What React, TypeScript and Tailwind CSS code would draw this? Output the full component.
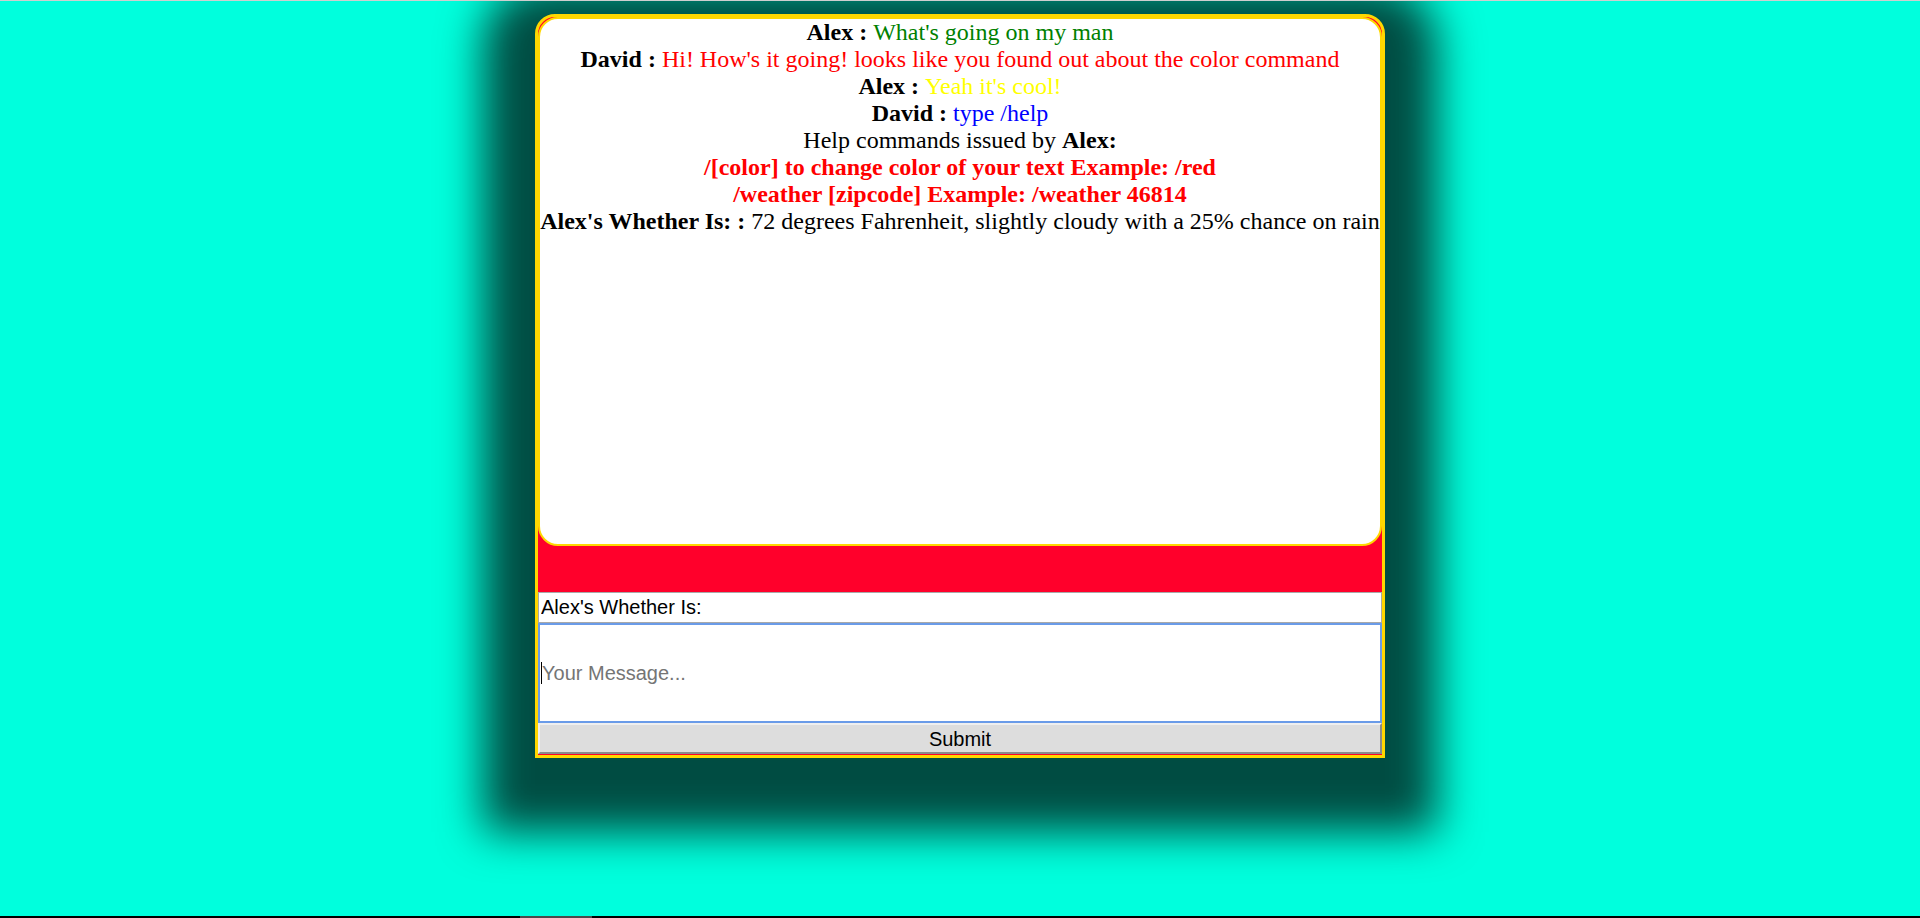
import React from "react";

export default function App() {
  return (
    <div className="h-[918px] w-full overflow-hidden bg-[#00ffdd] flex flex-col">
      <div className="relative z-10 h-px w-full bg-[#cfcfcf]" />
      <div className="flex-1 flex flex-col items-center">
        <div className="mt-[13px] w-[850px] border-[3px] border-[#ffd700] rounded-t-[20px] bg-[#ff002b] shadow-[0_22px_44px_52px_rgba(0,0,0,0.7)] flex flex-col">
          <div className="h-[529px] border-2 border-[#ffd700] rounded-[20px] bg-white text-center text-[24px] leading-[normal] text-black font-['Liberation_Serif',serif]">
            <div className="whitespace-nowrap">
              <b>Alex : </b>
              <span className="text-[#008000]">What's going on my man</span>
            </div>
            <div className="whitespace-nowrap">
              <b>David : </b>
              <span className="text-[#ff0000]">
                Hi! How's it going! looks like you found out about the color command
              </span>
            </div>
            <div className="whitespace-nowrap">
              <b>Alex : </b>
              <span className="text-[#ffff00]">Yeah it's cool!</span>
            </div>
            <div className="whitespace-nowrap">
              <b>David : </b>
              <span className="text-[#0000ff]">type /help</span>
            </div>
            <div className="whitespace-nowrap">
              Help commands issued by <b>Alex:</b>
            </div>
            <div className="whitespace-nowrap font-bold text-[#ff0000]">
              /[color] to change color of your text Example: /red
            </div>
            <div className="whitespace-nowrap font-bold text-[#ff0000]">
              /weather [zipcode] Example: /weather 46814
            </div>
            <div className="whitespace-nowrap">
              <b>Alex's Whether Is: : </b>72 degrees Fahrenheit, slightly cloudy with a 25% chance on rain
            </div>
          </div>
          <div className="h-[46px]" />
          <input
            readOnly
            defaultValue="Alex's Whether Is:"
            className="h-[31px] w-full border border-[#a9a9a9] bg-white pl-[2px] text-[20px] text-black outline-none font-['Liberation_Sans',Arial,sans-serif]"
          />
          <div className="relative">
            <input
              placeholder="Your Message..."
              className="block h-[100px] w-full border-2 border-[#6a9be8] bg-white pl-[2px] text-[20px] text-black outline-none placeholder:text-[#757575] font-['Liberation_Sans',Arial,sans-serif]"
            />
            <span className="pointer-events-none absolute left-[3px] top-[39px] h-[22px] w-px bg-black" />
          </div>
          <button className="h-[31px] w-full border-2 border-t-[#efefef] border-l-[#efefef] border-r-[#8a8a8a] border-b-[#8a8a8a] bg-[#dddddd] text-[20px] leading-none text-black font-['Liberation_Sans',Arial,sans-serif]">
            Submit
          </button>
          <div className="h-px" />
        </div>
      </div>
      <div className="relative z-10 h-[2px] w-full bg-black">
        <div className="absolute left-[520px] top-0 h-[2px] w-[72px] bg-[#4a4a4a]" />
      </div>
    </div>
  );
}
